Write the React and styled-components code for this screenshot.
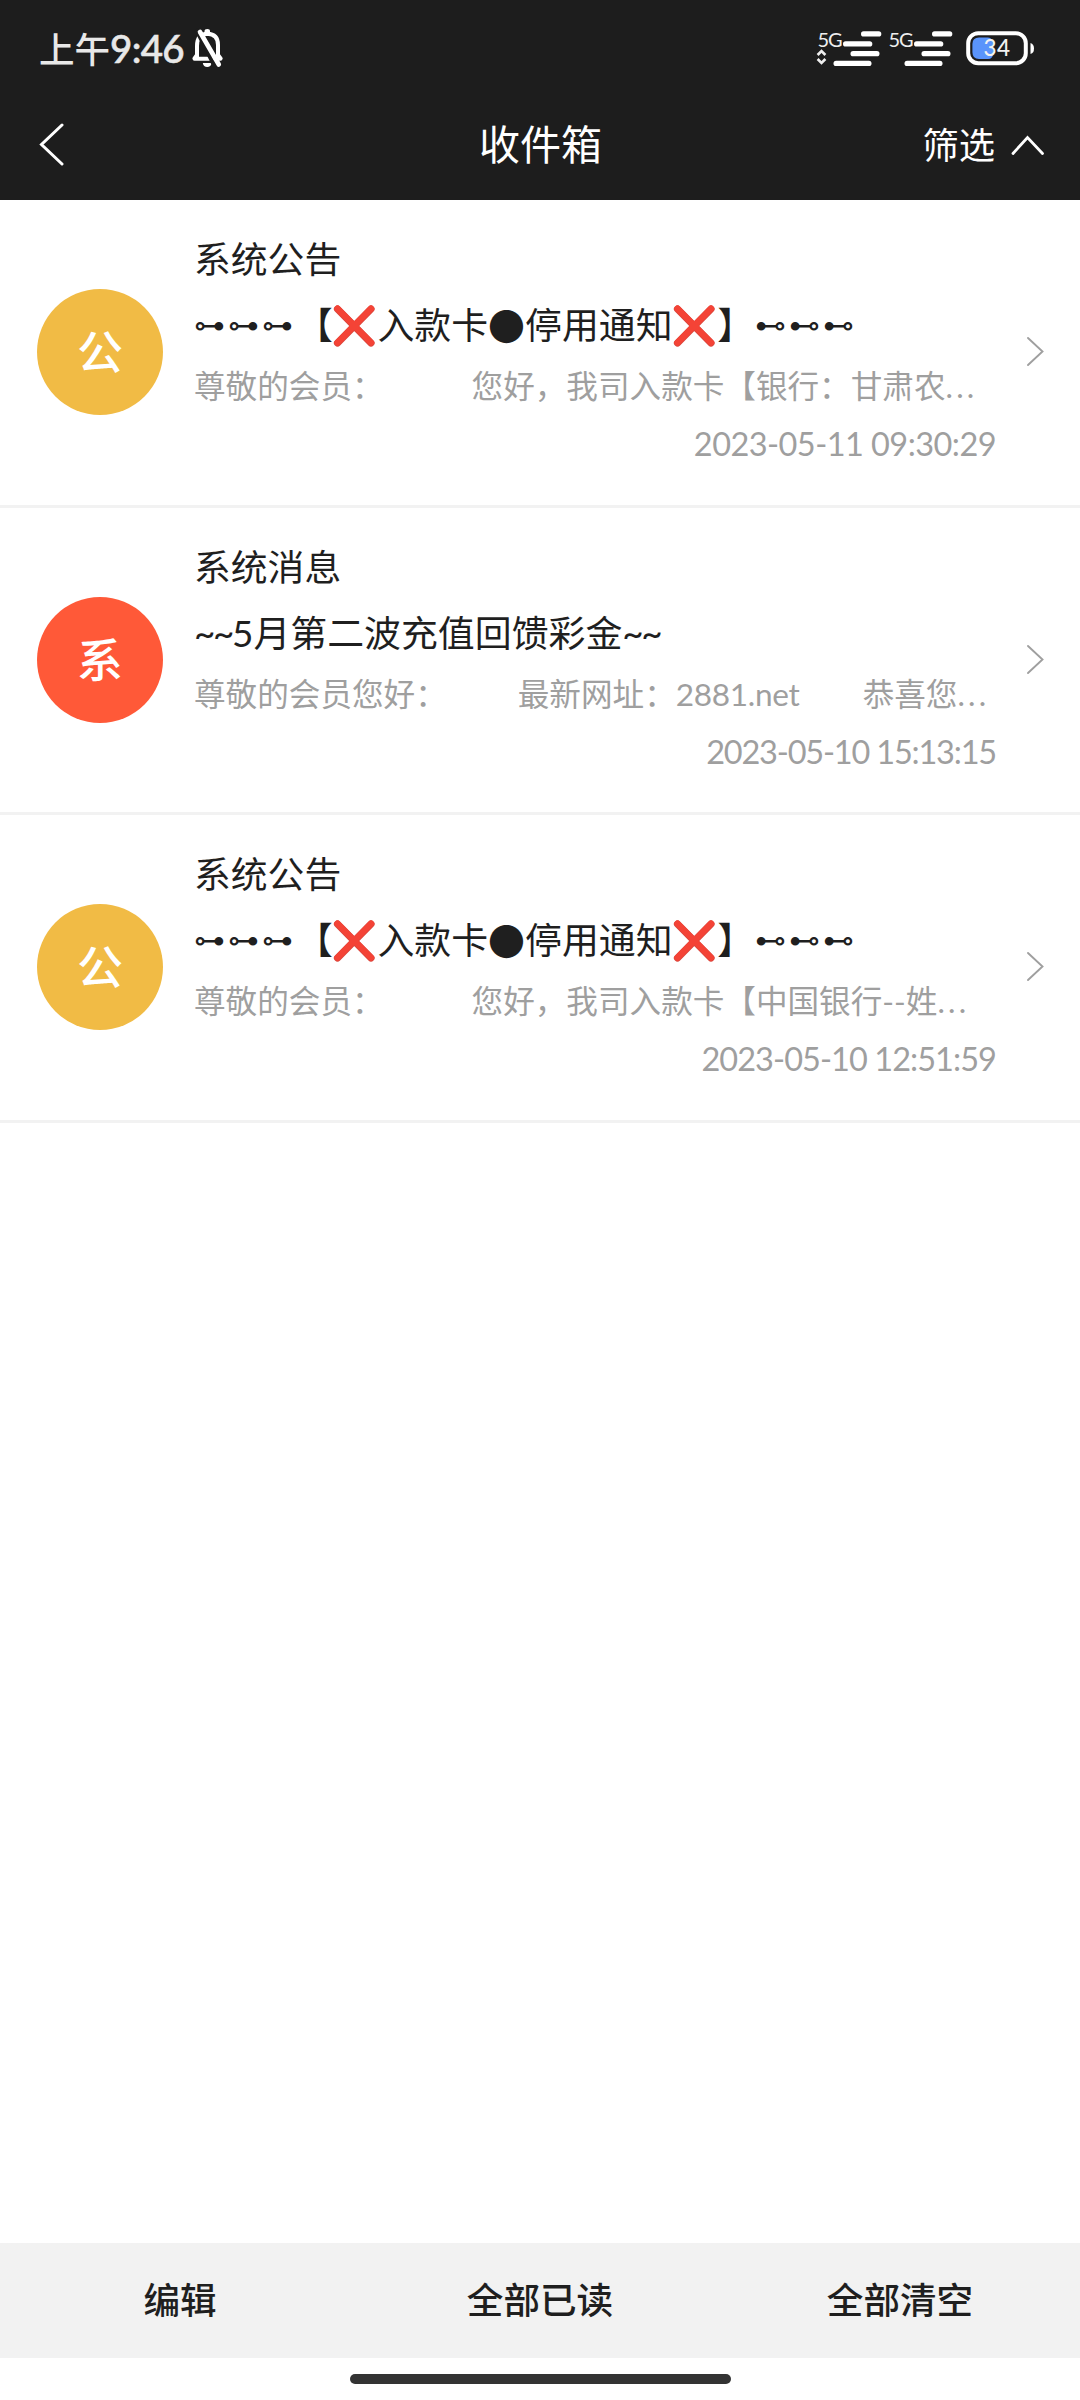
import React from "react";
import styled, { createGlobalStyle } from "styled-components";

const FONT = `Lato, "Noto Sans CJK SC", sans-serif`;

const GlobalStyle = createGlobalStyle`
  * { box-sizing: border-box; }
  html, body { margin: 0; padding: 0; background: #fff; }
  body { font-family: ${FONT}; }
`;

const Screen = styled.div`
  width: 1080px;
  height: 2400px;
  display: flex;
  flex-direction: column;
  overflow: hidden;
  background: #fff;
`;

const Header = styled.header`
  height: 200px;
  background: #1d1d1d;
  color: #fff;
`;

const StatusBar = styled.div`
  height: 96px;
  display: flex;
  justify-content: space-between;
  padding: 0 45px 0 39px;
`;

const StatusGroup = styled.div`
  display: flex;
  align-items: center;
  padding-top: 2px;
`;

const Clock = styled.div`
  display: flex;
  align-items: center;
  height: 96px;
  color: #e8e8e8;
  white-space: nowrap;
`;

const ClockPeriod = styled.span`
  font: 500 35.5px/96px "Noto Sans CJK SC", sans-serif;
`;

const ClockDigits = styled.span`
  font: 500 38.5px/98px ${FONT};
  letter-spacing: -0.7px;
  -webkit-text-stroke: 0.6px #e8e8e8;
  margin-right: 8px;
`;

const NavBar = styled.nav`
  height: 98px;
  display: grid;
  grid-template-columns: 1fr auto 1fr;
  align-items: center;
  padding: 0 36px 0 37px;
`;

const BackButton = styled.button`
  display: flex;
  border: 0;
  padding: 0;
  background: none;
  color: #fff;
`;

const NavTitle = styled.h1`
  margin: 0;
  font-size: 41px;
  font-weight: 400;
  line-height: 96px;
`;

const FilterButton = styled.button`
  display: flex;
  align-items: center;
  justify-content: flex-end;
  gap: 16px;
  border: 0;
  padding: 0;
  background: none;
  color: #fff;
  font: 400 36.3px/96px ${FONT};
`;

const List = styled.main`
  flex: 1;
`;

const Row = styled.article`
  height: 307.5px;
  display: flex;
  align-items: flex-start;
  padding: 26px 36px 0 37px;
  border-bottom: 3px solid #f2f2f2;
`;

const Avatar = styled.div`
  width: 126px;
  height: 126px;
  margin: 63px 31px 0 0;
  flex: none;
  border-radius: 50%;
  background: ${(p) => p.$color};
  color: #fff;
  text-align: center;
  font-size: 46px;
  font-weight: 500;
  line-height: 125px;
`;

const Body = styled.div`
  width: 802px;
  flex: none;
  white-space: nowrap;
`;

const Sender = styled.div`
  height: 66px;
  color: #1f1f1f;
  font-size: 36.8px;
  line-height: 67px;
`;

const Subject = styled.div`
  height: 66px;
  display: flex;
  align-items: center;
  color: #1f1f1f;
  font-size: 36.9px;
  line-height: 66px;
`;

const Links = styled.span`
  font-family: "DejaVu Sans", sans-serif;
  font-size: 31px;
  letter-spacing: 3px;
  margin-left: ${(p) => p.$offset || 0}px;
`;

const Tildes = styled.span`
  letter-spacing: -2.4px;
`;

const Disc = styled.span`
  width: 37px;
  font-family: "Noto Sans CJK SC", sans-serif;
  text-align: center;
`;

const Preview = styled.div`
  height: 56px;
  color: #9f9f9f;
  font-size: 31.6px;
  font-weight: 400;
  line-height: 57px;
`;

const Gap = styled.span`
  display: inline-block;
  width: ${(p) => p.$w}px;
`;

const Url = styled.span`
  letter-spacing: -0.3px;
`;

const Dots = styled.span`
  letter-spacing: 3.2px;
`;

const Time = styled.time`
  display: block;
  height: 61px;
  color: #9f9f9f;
  font-size: 32.5px;
  line-height: 60px;
  text-align: right;
  letter-spacing: ${(p) => p.$spacing}px;
`;

const Arrow = styled.div`
  margin: 110px 0 0 auto;
  display: flex;
`;

const ActionBar = styled.footer`
  height: 115px;
  display: grid;
  grid-template-columns: repeat(3, 1fr);
  background: #f2f2f2;
`;

const Action = styled.button`
  border: 0;
  padding: 0;
  background: none;
  color: #1f1f1f;
  font: 500 36.6px/113px ${FONT};
`;

const GestureArea = styled.div`
  height: 42.5px;
  display: flex;
  justify-content: center;
  padding-top: 16.5px;
`;

const GestureHandle = styled.div`
  width: 381px;
  height: 10px;
  border-radius: 5px;
  background: #333;
`;

const MutedBell = () => (
  <svg width="31" height="40" viewBox="0 0 31 40" fill="none">
    <path d="M5 30V18C5 9 10 6 15.500 5.800C22 6 26 9.500 26 17V30" stroke="#fff" strokeWidth="4" />
    <path d="M2.500 30.800H28.500M5 27L2.500 30.500M26 27L28.600 30.500" stroke="#fff" strokeWidth="4" strokeLinecap="round" />
    <path d="M12.500 5V3.200Q12.500 1 15.300 1T18 3.200V5Z" fill="#fff" />
    <path d="M10.800 35H19.600Q19 39 15.200 39T10.800 35Z" fill="#fff" />
    <path d="M4 1L23 39" stroke="#1d1d1d" strokeWidth="4" />
    <path d="M8 4L26.800 36.500" stroke="#fff" strokeWidth="4.600" strokeLinecap="round" />
  </svg>
);

const Signal = ({ data }) => (
  <svg width="71" height="60" viewBox="0 -10 71 60" fill="#fff">
    <text x="1.500" y="17.800" fontFamily="Lato" fontSize="20" fill="#eee" textLength="25">5G</text>
    {data && (
      <path d="M1.600 26L5.500 22L9.400 26M1.600 30L5.500 34L9.400 30" fill="none" stroke="#eee" strokeWidth="2.600" />
    )}
    <rect x="45" y="2.300" width="20.300" height="5.300" rx="2.600" />
    <rect x="27" y="12.200" width="29.300" height="5.300" rx="2.600" />
    <rect x="34.500" y="22" width="29" height="5.300" rx="2.600" />
    <rect x="17.500" y="31.800" width="38" height="5.300" rx="2.600" />
  </svg>
);

const Battery = () => (
  <svg width="69" height="36" viewBox="0 0 69 36">
    <rect x="2.200" y="2.200" width="57.600" height="30" rx="10" fill="none" stroke="#fff" strokeWidth="4" />
    <path d="M13 6.500H22Q27 7 27 13V22Q27 28 22 28H13Q6.400 28 6.400 21V13Q6.400 6.500 13 6.500Z" fill="#5a94fb" />
    <path d="M64.500 12Q68 13 68 17.500T64.500 23Z" fill="#fff" />
    <text x="17.500" y="25.300" fontFamily="Lato" fontSize="22.500" fontWeight="500" fill="#f2f2f2" textLength="26.500">34</text>
  </svg>
);

const BackIcon = () => (
  <svg width="28" height="44" viewBox="0 0 28 44" fill="none">
    <path d="M25 2L4.500 21.500L25 41" stroke="#fff" strokeWidth="3" strokeLinecap="round" />
  </svg>
);

const UpIcon = () => (
  <svg width="33" height="22" viewBox="0 0 33 22" fill="none">
    <path d="M2 19.500L16.500 3.500L31.500 19.500" stroke="#fff" strokeWidth="2.800" strokeLinecap="round" />
  </svg>
);

const RightIcon = () => (
  <svg width="18" height="31" viewBox="0 0 18 31" fill="none">
    <path d="M2 2L16.500 15.500L2 29" stroke="#9f9f9f" strokeWidth="1.900" strokeLinecap="round" />
  </svg>
);

const Cross = () => (
  <svg width="44.500" height="44" viewBox="0 0 44.500 44" fill="none">
    <path d="M4.500 6L38 40M38 6L4.500 40" stroke="#d9453b" strokeWidth="7.200" strokeLinecap="round" />
    <path d="M4.500 5.600L38 39.600M38 5.600L4.500 39.600" stroke="#f44336" strokeWidth="6.200" strokeLinecap="round" />
  </svg>
);

const NoticeSubject = () => (
  <Subject>
    <Links>⊶⊶⊶</Links>
    【<Cross />入款卡<Disc>●</Disc>停用通知<Cross />】
    <Links $offset={1}>⊷⊷⊷</Links>
  </Subject>
);

const messages = [
  {
    mark: "公",
    color: "#f1bb45",
    sender: "系统公告",
    subject: <NoticeSubject />,
    preview: <>尊敬的会员：<Gap $w={88} />您好，我司入款卡【银行：甘肃农<Dots>...</Dots></>,
    time: "2023-05-11 09:30:29",
    spacing: -0.55,
  },
  {
    mark: "系",
    color: "#ff5938",
    sender: "系统消息",
    subject: (
      <Subject>
        <Tildes>~~</Tildes>5月第二波充值回馈彩金<Tildes>~~</Tildes>
      </Subject>
    ),
    preview: (
      <>尊敬的会员您好：<Gap $w={71} />最新网址：<Url>2881.net</Url><Gap $w={63} />恭喜您<Dots>...</Dots></>
    ),
    time: "2023-05-10 15:13:15",
    spacing: -1.2,
  },
  {
    mark: "公",
    color: "#f1bb45",
    sender: "系统公告",
    subject: <NoticeSubject />,
    preview: <>尊敬的会员：<Gap $w={88} />您好，我司入款卡【中国银行--姓<Dots>...</Dots></>,
    time: "2023-05-10 12:51:59",
    spacing: -0.95,
  },
];

export default function App() {
  return (
    <Screen>
      <GlobalStyle />
      <Header>
        <StatusBar>
          <Clock>
            <ClockPeriod>上午</ClockPeriod>
            <ClockDigits>9:46</ClockDigits>
            <MutedBell />
          </Clock>
          <StatusGroup>
            <Signal data />
            <Signal />
            <Gap $w={8} />
            <Battery />
          </StatusGroup>
        </StatusBar>
        <NavBar>
          <BackButton aria-label="返回"><BackIcon /></BackButton>
          <NavTitle>收件箱</NavTitle>
          <FilterButton>筛选<UpIcon /></FilterButton>
        </NavBar>
      </Header>
      <List>
        {messages.map((m) => (
          <Row key={m.time}>
            <Avatar $color={m.color}>{m.mark}</Avatar>
            <Body>
              <Sender>{m.sender}</Sender>
              {m.subject}
              <Preview>{m.preview}</Preview>
              <Time $spacing={m.spacing}>{m.time}</Time>
            </Body>
            <Arrow><RightIcon /></Arrow>
          </Row>
        ))}
      </List>
      <ActionBar>
        <Action>编辑</Action>
        <Action>全部已读</Action>
        <Action>全部清空</Action>
      </ActionBar>
      <GestureArea><GestureHandle /></GestureArea>
    </Screen>
  );
}
